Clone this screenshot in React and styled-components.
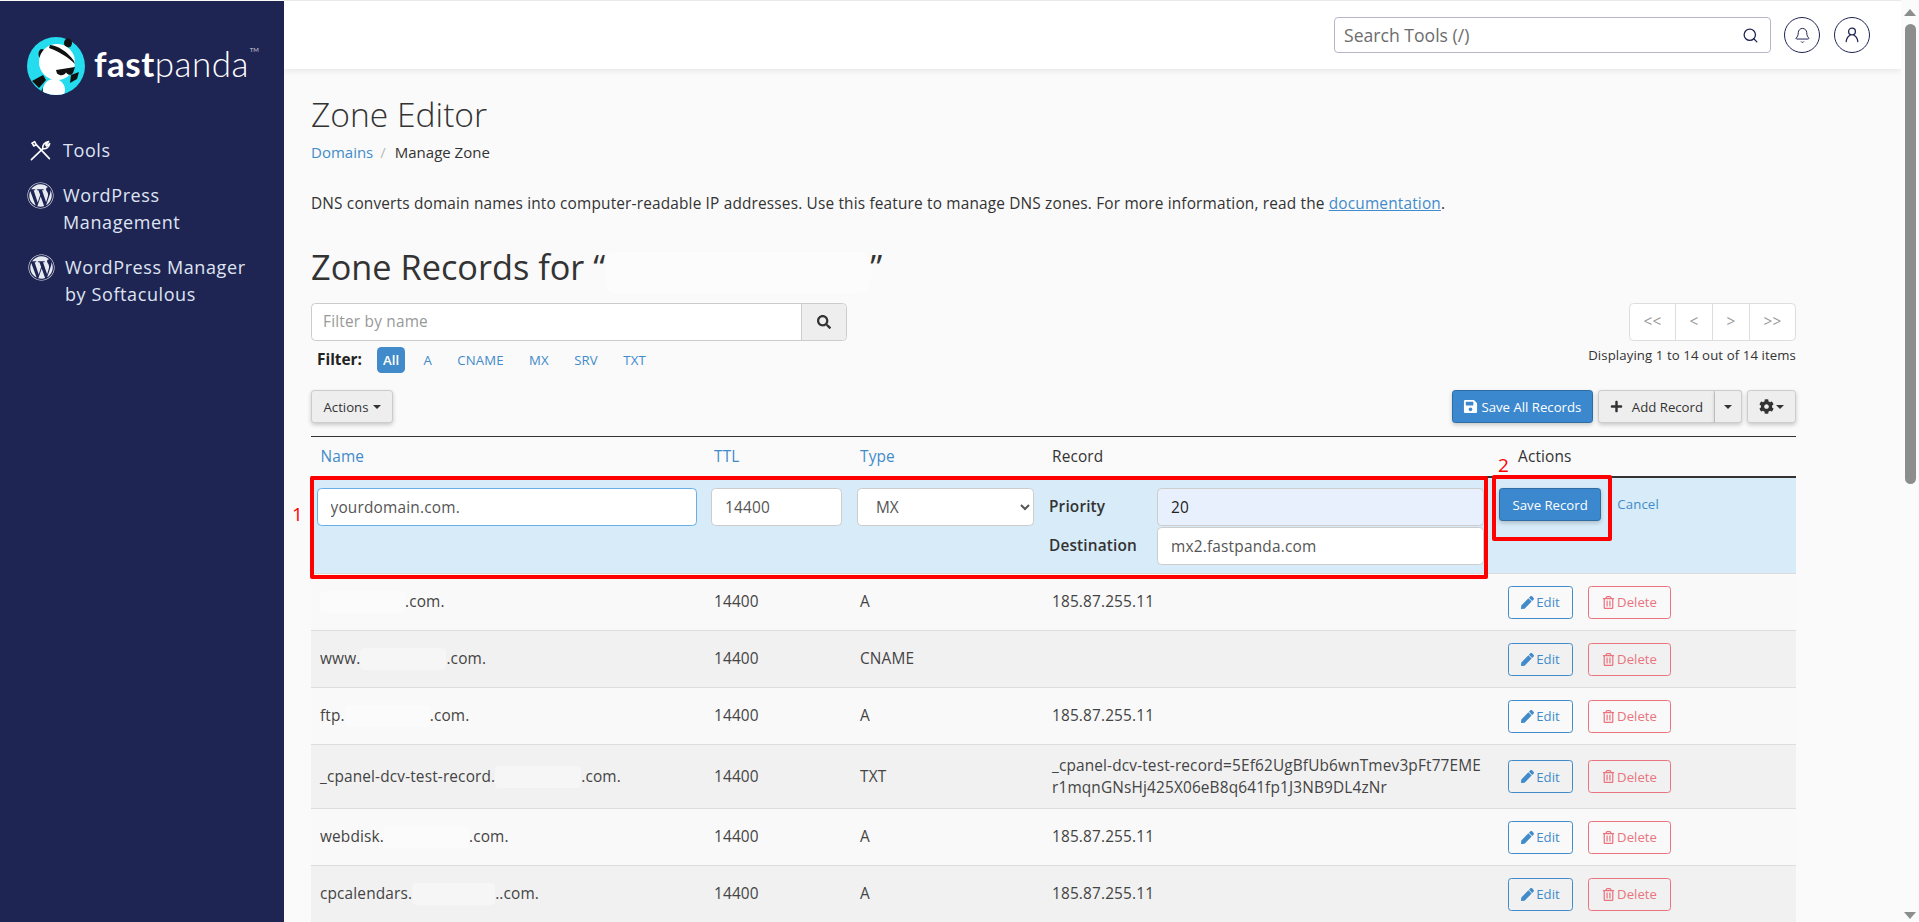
import React from 'react';
import styled, { createGlobalStyle } from 'styled-components';
import { FaWordpress, FaSearch, FaSave, FaPlus, FaCog, FaPen, FaRegTrashAlt } from 'react-icons/fa';
import { Search, Bell } from 'lucide-react';

const GlobalStyle = createGlobalStyle`
  html, body {
    margin: 0;
    height: 100%;
    overflow: hidden;
    background: #fafafa;
  }
  body {
    font-family: "Open Sans", "Liberation Sans", sans-serif;
    font-size: 15.4px;
    line-height: 22px;
    letter-spacing: 0.15px;
    color: #333;
  }
  * { box-sizing: border-box; }
`;

const Page = styled.div`
  display: grid;
  grid-template-columns: 284px 1fr 18px;
  height: 922px;
  overflow: hidden;
`;

const Sidebar = styled.aside`
  background: #1f2553;
  margin-top: 1px;
  padding: 36px 0 0 27px;
`;

const LogoRow = styled.div`
  display: flex;
  align-items: center;
  height: 58px;
  gap: 9px;
`;

const LogoText = styled.div`
  position: relative;
  font-family: Lato, "Open Sans", sans-serif;
  font-size: 35px;
  line-height: 40px;
  color: #fff;
  letter-spacing: 0.5px;
  font-weight: 300;
  margin-top: -7px;
  b { font-weight: 700; }
  sup {
    position: absolute;
    top: 4px;
    right: -10px;
    font-size: 6px;
    line-height: 6px;
    font-weight: 400;
    letter-spacing: 0;
    color: #c9cbd8;
  }
`;

const Nav = styled.nav`
  display: flex;
  flex-direction: column;
  gap: 18px;
  margin-top: 42px;
`;

const NavItem = styled.a`
  display: flex;
  align-items: flex-start;
  gap: 9px;
  margin-left: ${p => p.$indent || 0}px;
  font-size: 18px;
  line-height: 27px;
  letter-spacing: 0.6px;
  color: #dfe4f2;
`;

const NavIcon = styled.span`
  display: flex;
  flex: none;
  width: 27px;
  height: 27px;
  align-items: center;
  justify-content: center;
  color: #e8eaf2;
`;

const Content = styled.div`
  min-width: 0;
  display: flex;
  flex-direction: column;
`;

const Topbar = styled.header`
  display: flex;
  flex: none;
  height: 69px;
  align-items: center;
  justify-content: flex-end;
  gap: 14px;
  padding: 0 31px 0 0;
  background: #fff;
  border-top: 1px solid #e9e9e9;
  box-shadow: 0 2px 6px rgba(0, 0, 0, 0.08);
`;

const SearchBox = styled.div`
  display: flex;
  width: 437px;
  height: 36px;
  align-items: center;
  justify-content: space-between;
  margin-right: -1px;
  padding: 0 11px 0 9px;
  border: 1px solid #b5b7c9;
  border-radius: 4px;
  font-size: 17.6px;
  letter-spacing: 0;
  color: #6c6c6c;
  svg { color: #1f2553; }
`;

const RoundButton = styled.button`
  display: flex;
  width: 36px;
  height: 36px;
  align-items: center;
  justify-content: center;
  padding: 0;
  background: #fff;
  border: 1px solid #1f2553;
  border-radius: 50%;
  color: #1f2553;
`;

const Main = styled.main`
  padding: 23px 105px 0 27px;
  overflow: hidden;
`;

const PageTitle = styled.h1`
  margin: 0;
  height: 44px;
  font-size: 33.6px;
  line-height: 44px;
  font-weight: 300;
  letter-spacing: 0;
  color: #333;
`;

const Breadcrumb = styled.div`
  display: flex;
  margin-top: 5px;
  font-size: 15px;
  line-height: 22px;
  letter-spacing: 0;
  a { color: #428bca; }
  i { margin: 0 9px 0 7px; color: #bbb; font-style: normal; }
`;

const Intro = styled.p`
  margin: 30px 0 0;
  font-size: 15.4px;
  line-height: 22px;
  letter-spacing: 0.17px;
  a { color: #428bca; text-decoration: underline; }
`;

const Redacted = styled.span`
  display: inline-block;
  width: ${p => p.$width}px;
  background: rgba(255, 255, 255, 0.35);
  border-radius: 4px;
`;

const SectionTitle = styled.h2`
  display: flex;
  margin: 34px 0 0;
  height: 36px;
  font-size: 34.3px;
  line-height: 36px;
  font-weight: 500;
  letter-spacing: 0;
  color: #333;
  ${Redacted} {
    height: 41px;
    margin-top: 3px;
    border-radius: 10px;
  }
`;

const Controls = styled.div`
  display: flex;
  justify-content: space-between;
  margin-top: 18px;
`;

const FilterArea = styled.div`
  display: flex;
  flex-direction: column;
  gap: 6px;
`;

const FilterInput = styled.div`
  display: flex;
  width: 536px;
  height: 38px;
  border: 1px solid #ccc;
  border-radius: 4.4px;
  background: #fff;
  input {
    flex: 1;
    min-width: 0;
    padding: 0 11px;
    border: 0;
    border-radius: 4.4px;
    background: transparent;
    font: inherit;
    letter-spacing: 0.2px;
    outline: none;
    &::placeholder { color: #999; }
  }
`;

const FilterSearchButton = styled.span`
  display: flex;
  width: 45px;
  align-items: center;
  justify-content: center;
  background: #eee;
  border-left: 1px solid #ccc;
  border-radius: 0 4.4px 4.4px 0;
  color: #333;
  font-size: 14px;
`;

const FilterLine = styled.div`
  display: flex;
  height: 26px;
  align-items: center;
  padding-left: 6px;
  font-size: 13.2px;
  letter-spacing: 0.1px;
  strong { margin-right: 15px; font-size: 15.4px; font-weight: 700; color: #222; letter-spacing: 0; }
`;

const Chip = styled.a`
  height: 26px;
  line-height: 26px;
  padding: 0 ${p => (p.$active ? 6 : 7.5)}px;
  margin-right: 10.5px;
  border-radius: 4.4px;
  background: ${p => (p.$active ? '#428bca' : 'transparent')};
  color: ${p => (p.$active ? '#fff' : '#428bca')};
  font-weight: ${p => (p.$active ? 600 : 400)};
`;

const PagerArea = styled.div`
  display: flex;
  flex-direction: column;
  align-items: flex-end;
`;

const Pager = styled.div`
  display: flex;
  height: 38px;
  background: #fff;
  border: 1px solid #ddd;
  border-radius: 4.4px;
`;

const PagerCell = styled.span`
  display: flex;
  width: ${p => p.$width}px;
  align-items: center;
  justify-content: center;
  font-size: 15.4px;
  color: #999;
  & + & { border-left: 1px solid #ddd; }
`;

const PagerNote = styled.div`
  margin-top: 3px;
  font-size: 13.2px;
  line-height: 22px;
  letter-spacing: 0.1px;
`;

const ButtonBar = styled.div`
  display: flex;
  justify-content: space-between;
  margin-top: 17px;
`;

const ButtonGroup = styled.div`
  display: flex;
  gap: 5px;
`;

const Btn = styled.button`
  display: inline-flex;
  height: 33px;
  align-items: center;
  gap: ${p => p.$gap || 0}px;
  padding: 0 ${p => p.$pad || 11.5}px;
  background: #eee;
  border: 1px solid #ccc;
  border-radius: 3.3px;
  box-shadow: 0 2px 4px rgba(0, 0, 0, 0.2);
  font-family: inherit;
  font-size: 13.2px;
  color: #333;
`;

const PrimaryBtn = styled(Btn)`
  background: #3b88ce;
  border-color: #2e6da4;
  color: #fff;
`;

const SplitBtn = styled.div`
  display: flex;
  ${Btn}:first-child { border-radius: 3.3px 0 0 3.3px; }
  ${Btn}:last-child { border-left: 0; border-radius: 0 3.3px 3.3px 0; }
`;

const Caret = styled.span`
  display: inline-block;
  width: 0;
  height: 0;
  margin-left: ${p => p.$gap ?? 4}px;
  border-top: 4.4px solid #333;
  border-left: 4.4px solid transparent;
  border-right: 4.4px solid transparent;
`;

const TableWrap = styled.div`
  position: relative;
  margin-top: 13px;
  border-top: 1px solid #333;
`;

const Table = styled.table`
  width: 1485px;
  table-layout: fixed;
  border-collapse: separate;
  border-spacing: 0;
`;

const Th = styled.th`
  height: 41px;
  padding: 0 0 0 ${p => p.$pad ?? 11}px;
  text-align: left;
  font-size: 15.4px;
  font-weight: 400;
  color: ${p => (p.$plain ? '#333' : '#428bca')};
  border-bottom: 2px solid #333;
`;

const Row = styled.tr`
  background: ${p => (p.$even ? '#f1f1f1' : '#f9f9f9')};
`;

const Td = styled.td`
  height: 57px;
  padding: 9.5px 11px;
  padding-left: ${p => p.$pad ?? 11}px;
  vertical-align: middle;
  line-height: 22px;
  color: #444;
  border-bottom: 1px solid #ddd;
`;

const EditRow = styled.tr`
  background: #d7ebf8;
`;

const EditTd = styled.td`
  height: 96px;
  padding: 10px 0 0 ${p => p.$pad ?? 8}px;
  vertical-align: top;
  border-bottom: 1px solid #ddd;
`;

const Field = styled.input`
  display: block;
  width: ${p => p.$width}px;
  height: 38px;
  padding: 0 13px;
  background: ${p => (p.$filled ? '#e8f0fe' : '#fff')};
  border: 1px solid ${p => (p.$focus ? '#66afe9' : '#ccc')};
  border-radius: 4.4px;
  font: inherit;
  letter-spacing: 0.2px;
  color: ${p => (p.$filled ? '#222' : '#555')};
  outline: none;
`;

const SelectField = styled.select`
  display: block;
  width: 177px;
  height: 38px;
  padding: 0 14px;
  background: #fff;
  border: 1px solid #ccc;
  border-radius: 4.4px;
  font: inherit;
  color: #555;
`;

const RecordGrid = styled.div`
  display: grid;
  grid-template-columns: 108px 327px;
  row-gap: 1px;
  align-items: center;
  label { font-weight: 600; color: #333; }
`;

const EditActions = styled.div`
  display: flex;
  align-items: center;
  gap: 16px;
  a { font-size: 13.2px; color: #428bca; margin-top: -2px; }
`;

const RowActions = styled.div`
  display: flex;
  gap: 15px;
`;

const OutlineBtn = styled.button`
  display: inline-flex;
  height: 33px;
  width: ${p => p.$width}px;
  align-items: center;
  justify-content: center;
  gap: 2px;
  padding: 0;
  background: transparent;
  border: 1px solid ${p => p.$color};
  border-radius: 3.3px;
  font-family: inherit;
  font-size: 13.2px;
  color: ${p => p.$color};
`;

// red annotations painted on top of the screenshot
const Marker = styled.div`
  position: absolute;
  left: ${p => p.$left}px;
  top: ${p => p.$top}px;
  width: ${p => p.$width}px;
  height: ${p => p.$height}px;
  border: 4px solid #f00;
  border-radius: 2px;
  pointer-events: none;
`;

const MarkerLabel = styled.span`
  position: absolute;
  left: ${p => p.$left}px;
  top: ${p => p.$top}px;
  font-size: 19px;
  line-height: 20px;
  letter-spacing: 0;
  color: #f00;
`;

const ScrollTrack = styled.div`
  position: relative;
  background: #fbfbfb;
`;

const ScrollArrow = styled.span`
  position: absolute;
  left: 3px;
  ${p => (p.$down ? 'bottom: 4px;' : 'top: 9px;')}
  border-left: 6px solid transparent;
  border-right: 6px solid transparent;
  ${p => (p.$down ? 'border-top' : 'border-bottom')}: 7px solid #8d8d8d;
`;

const ScrollThumb = styled.span`
  position: absolute;
  left: 4px;
  top: 24px;
  width: 11px;
  height: 460px;
  border-radius: 6px;
  background: #8d8d8d;
`;

const PandaLogo = () => (
  <svg width="58" height="58" viewBox="0 0 58 58">
    <defs>
      <clipPath id="logoClip">
        <circle cx="29" cy="29" r="29" />
      </clipPath>
    </defs>
    <circle cx="29" cy="29" r="29" fill="#25dcef" />
    <ellipse cx="41" cy="6" rx="4" ry="4.5" fill="#111" />
    <ellipse cx="15" cy="17" rx="3.5" ry="5" fill="#111" />
    <ellipse cx="30" cy="25" rx="18" ry="18" fill="#fff" />
    <g clipPath="url(#logoClip)">
      <path d="M23 8 C31 9 40 14 47 24 L48 27 C42 21 33 15 22 11 Z" fill="#111" />
      <path d="M29 33 L48 30 L46 36 C44 39 41 38 39 35.5 C37 39 33 39 30 36.5 Z" fill="#111" />
      <path d="M5 44 L16 38 L19 43 L12 51 Z" fill="#111" />
      <path d="M44 38 L52 35 L50 42 L43 46 Z" fill="#111" />
      <circle cx="27" cy="53" r="11" fill="#fff" />
      <path d="M17 46 C15 50 15 56 18 60 L13 58 Z" fill="#111" />
    </g>
  </svg>
);

const ToolsIcon = () => (
  <svg width="21" height="21" viewBox="0 0 21 21" fill="none" stroke="#fff" strokeWidth="1.6" strokeLinecap="round" strokeLinejoin="round">
    <path d="M2.2 3.2 L4.6 1.6 L6.2 4.6 L19.4 18.6" />
    <path d="M2.2 3.2 L3.8 6 L6.2 4.6" />
    <path d="M1.4 19.6 L12.8 8.6" />
    <path d="M12.8 8.6 C12.2 5.2 14.6 2.2 18.6 1.6 L15.8 5 L16.6 6 L19.6 3.6 C19.2 7 16.2 9.4 12.8 8.6 Z" />
  </svg>
);

const UserIcon = () => (
  <svg width="18" height="18" viewBox="0 0 18 18" fill="none" stroke="currentColor" strokeWidth="1.3" strokeLinecap="round">
    <circle cx="9" cy="5.5" r="3.4" />
    <path d="M3.2 15.5 C3.6 12 5.8 9.6 7 9.4 M14.8 15.5 C14.4 12 12.2 9.6 11 9.4" />
  </svg>
);

const rows = [
  { pre: '', gap: 85, post: '.com.', type: 'A', record: '185.87.255.11' },
  { pre: 'www.', gap: 86, post: '.com.', type: 'CNAME', record: '' },
  { pre: 'ftp.', gap: 85, post: '.com.', type: 'A', record: '185.87.255.11' },
  {
    pre: '_cpanel-dcv-test-record.',
    gap: 86,
    post: '.com.',
    type: 'TXT',
    record: (
      <>
        _cpanel-dcv-test-record=5Ef62UgBfUb6wnTmev3pFt77EME
        <br />
        r1mqnGNsHj425X06eB8q641fp1J3NB9DL4zNr
      </>
    ),
  },
  { pre: 'webdisk.', gap: 85, post: '.com.', type: 'A', record: '185.87.255.11' },
  { pre: 'cpcalendars.', gap: 83, post: '..com.', type: 'A', record: '185.87.255.11' },
];

const chips = ['All', 'A', 'CNAME', 'MX', 'SRV', 'TXT'];

const App = () => {
  return (
    <Page>
      <GlobalStyle />
      <Sidebar>
        <LogoRow>
          <PandaLogo />
          <LogoText>
            <b>fast</b>panda<sup>TM</sup>
          </LogoText>
        </LogoRow>
        <Nav>
          <NavItem>
            <NavIcon><ToolsIcon /></NavIcon>
            <span>Tools</span>
          </NavItem>
          <NavItem>
            <NavIcon><FaWordpress size={27} /></NavIcon>
            <span>WordPress<br />Management</span>
          </NavItem>
          <NavItem $indent={1}>
            <NavIcon><FaWordpress size={27} /></NavIcon>
            <span style={{ marginLeft: 1 }}>WordPress Manager<br />by Softaculous</span>
          </NavItem>
        </Nav>
      </Sidebar>

      <Content>
        <Topbar>
          <SearchBox>
            <span>Search Tools (/)</span>
            <Search size={17} strokeWidth={1.8} />
          </SearchBox>
          <RoundButton><Bell size={17} strokeWidth={1.4} /></RoundButton>
          <RoundButton><UserIcon /></RoundButton>
        </Topbar>

        <Main>
          <PageTitle>Zone Editor</PageTitle>
          <Breadcrumb>
            <a>Domains</a><i>/</i><span>Manage Zone</span>
          </Breadcrumb>
          <Intro>
            DNS converts domain names into computer-readable IP addresses. Use this feature to manage DNS zones. For more information, read the <a>documentation</a>.
          </Intro>
          <SectionTitle>
            Zone Records for “<Redacted $width={265} />”
          </SectionTitle>

          <Controls>
            <FilterArea>
              <FilterInput>
                <input placeholder="Filter by name" readOnly />
                <FilterSearchButton><FaSearch /></FilterSearchButton>
              </FilterInput>
              <FilterLine>
                <strong>Filter:</strong>
                {chips.map((c, i) => (
                  <Chip key={c} $active={i === 0}>{c}</Chip>
                ))}
              </FilterLine>
            </FilterArea>
            <PagerArea>
              <Pager>
                <PagerCell $width={45}>&lt;&lt;</PagerCell>
                <PagerCell $width={37}>&lt;</PagerCell>
                <PagerCell $width={37}>&gt;</PagerCell>
                <PagerCell $width={46}>&gt;&gt;</PagerCell>
              </Pager>
              <PagerNote>Displaying 1 to 14 out of 14 items</PagerNote>
            </PagerArea>
          </Controls>

          <ButtonBar>
            <Btn>Actions<Caret /></Btn>
            <ButtonGroup>
              <PrimaryBtn $pad={10.5} $gap={3}><FaSave size={15} />Save All Records</PrimaryBtn>
              <SplitBtn>
                <Btn $pad={11} $gap={9}><FaPlus size={13} />Add Record</Btn>
                <Btn $pad={9}><Caret $gap={0} /></Btn>
              </SplitBtn>
              <Btn $pad={11}><FaCog size={15} /><Caret $gap={2} /></Btn>
            </ButtonGroup>
          </ButtonBar>

          <TableWrap>
            <Table>
              <colgroup>
                <col style={{ width: 392 }} />
                <col style={{ width: 146 }} />
                <col style={{ width: 192 }} />
                <col style={{ width: 456 }} />
                <col style={{ width: 299 }} />
              </colgroup>
              <thead>
                <tr>
                  <Th $pad={9.5}>Name</Th>
                  <Th>TTL</Th>
                  <Th>Type</Th>
                  <Th $plain>Record</Th>
                  <Th $plain $pad={21}>Actions</Th>
                </tr>
              </thead>
              <tbody>
                <EditRow>
                  <EditTd $pad={5.5}><Field $width={380} $focus defaultValue="yourdomain.com." /></EditTd>
                  <EditTd><Field $width={131} defaultValue="14400" /></EditTd>
                  <EditTd>
                    <SelectField defaultValue="MX">
                      <option>A</option>
                      <option>CNAME</option>
                      <option>MX</option>
                      <option>SRV</option>
                      <option>TXT</option>
                    </SelectField>
                  </EditTd>
                  <EditTd>
                    <RecordGrid>
                      <label>Priority</label>
                      <Field $width={327} $filled defaultValue="20" />
                      <label>Destination</label>
                      <Field $width={327} defaultValue="mx2.fastpanda.com" />
                    </RecordGrid>
                  </EditTd>
                  <EditTd $pad={2}>
                    <EditActions>
                      <PrimaryBtn $pad={12.5}>Save Record</PrimaryBtn>
                      <a>Cancel</a>
                    </EditActions>
                  </EditTd>
                </EditRow>
                {rows.map((r, i) => (
                  <Row key={i} $even={i % 2 === 1}>
                    <Td $pad={9}>
                      {r.pre}<Redacted $width={r.gap}>&nbsp;</Redacted>{r.post}
                    </Td>
                    <Td>14400</Td>
                    <Td>{r.type}</Td>
                    <Td>{r.record}</Td>
                    <Td>
                      <RowActions>
                        <OutlineBtn $width={65} $color="#428bca"><FaPen size={13} />Edit</OutlineBtn>
                        <OutlineBtn $width={83} $color="#e9747f"><FaRegTrashAlt size={13} />Delete</OutlineBtn>
                      </RowActions>
                    </Td>
                  </Row>
                ))}
              </tbody>
            </Table>
            <Marker $left={-1} $top={39} $width={1178} $height={103} />
            <Marker $left={1181} $top={38} $width={120} $height={66} />
            <MarkerLabel $left={-19} $top={67}>1</MarkerLabel>
            <MarkerLabel $left={1187} $top={18}>2</MarkerLabel>
          </TableWrap>
        </Main>
      </Content>

      <ScrollTrack>
        <ScrollArrow />
        <ScrollThumb />
        <ScrollArrow $down />
      </ScrollTrack>
    </Page>
  );
};

export default App;
